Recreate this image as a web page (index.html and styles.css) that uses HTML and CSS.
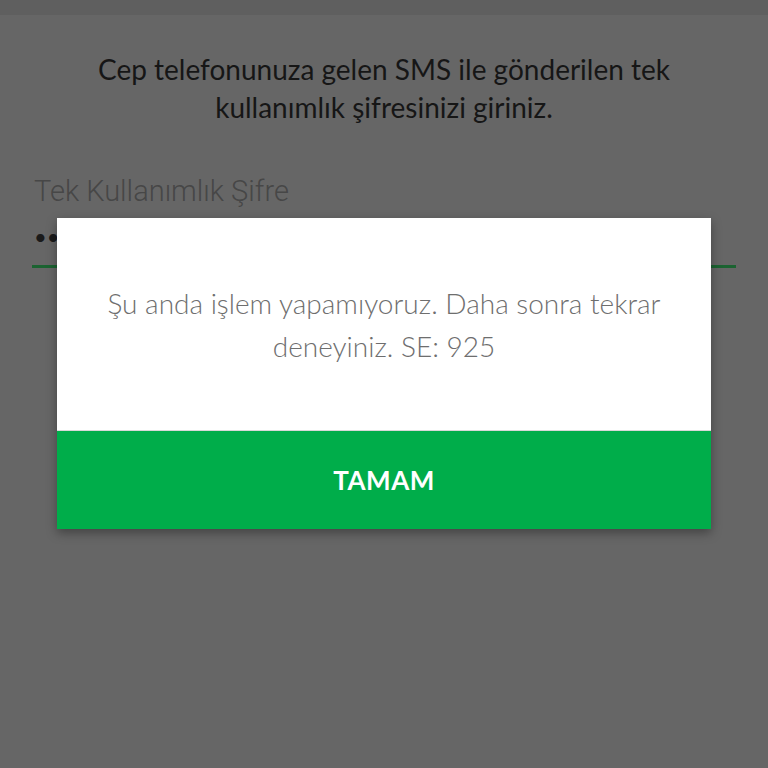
FILE: index.html
```html
<!DOCTYPE html>
<html lang="tr">
  <head>
    <meta charset="UTF-8" />
    <meta name="viewport" content="width=device-width, initial-scale=1.0" />
    <title>Tek Kullanımlık Şifre</title>
    <link rel="stylesheet" href="styles.css">
  </head>
  <body>
    <div class="status-bar"></div>
    <div class="screen">
      <p class="intro">
        Cep telefonunuza gelen SMS ile gönderilen tek<br />kullanımlık şifresinizi giriniz.
      </p>

      <div class="field">
        <label for="otp">Tek Kullanımlık Şifre</label>
        <div class="dots" id="otp">••</div>
      </div>
    </div>

    <div class="overlay">
      <div class="dialog">
        <div class="dialog-body">
          <p>Şu anda işlem yapamıyoruz. Daha sonra tekrar<br />deneyiniz. SE: 925</p>
        </div>
        <button type="button" class="dialog-btn">TAMAM</button>
      </div>
    </div>
  </body>
</html>
```

FILE: styles.css
```css
body {
  font-family: "Lato", sans-serif;
  background-color: #666666;
  margin: 0;
  padding: 0;
  height: 768px;
  overflow: hidden;
}

.status-bar {
  height: 15px;
  background-color: #5f5f5f;
}

.screen {
  padding: 0 32px;
}

.intro {
  margin: 35px 0 0;
  text-align: center;
  font-size: 28px;
  line-height: 38px;
  color: #161616;
}

.field {
  margin-top: 49px;
}

.field label {
  display: block;
  font-family: "Roboto", sans-serif;
  font-weight: 300;
  font-size: 29px;
  line-height: 32px;
  color: #474747;
  padding-left: 2px;
}

.dots {
  font-size: 22px;
  color: #1a1a1a;
  height: 48px;
  line-height: 40px;
  margin-top: 10px;
  padding-left: 2px;
  border-bottom: 3px solid #1b6331;
}

.overlay {
  position: absolute;
  top: 218px;
  left: 57px;
}

.dialog {
  width: 654px;
  box-shadow: 0 4px 10px rgba(0, 0, 0, 0.35);
}

.dialog-body {
  background-color: #ffffff;
  height: 213px;
  display: flex;
  align-items: center;
  justify-content: center;
  border-bottom: 1px solid #d8d8d8;
  box-sizing: border-box;
}

.dialog-body p {
  margin: 0;
  text-align: center;
  font-weight: 300;
  font-size: 28px;
  line-height: 43px;
  color: #6e6e6e;
  padding-top: 2px;
}

.dialog-btn {
  display: block;
  width: 100%;
  height: 98px;
  background-color: #00ad4a;
  color: #ffffff;
  border: none;
  font-family: "Lato", sans-serif;
  font-weight: bold;
  font-size: 26px;
  letter-spacing: 0.5px;
  cursor: pointer;
}
```
